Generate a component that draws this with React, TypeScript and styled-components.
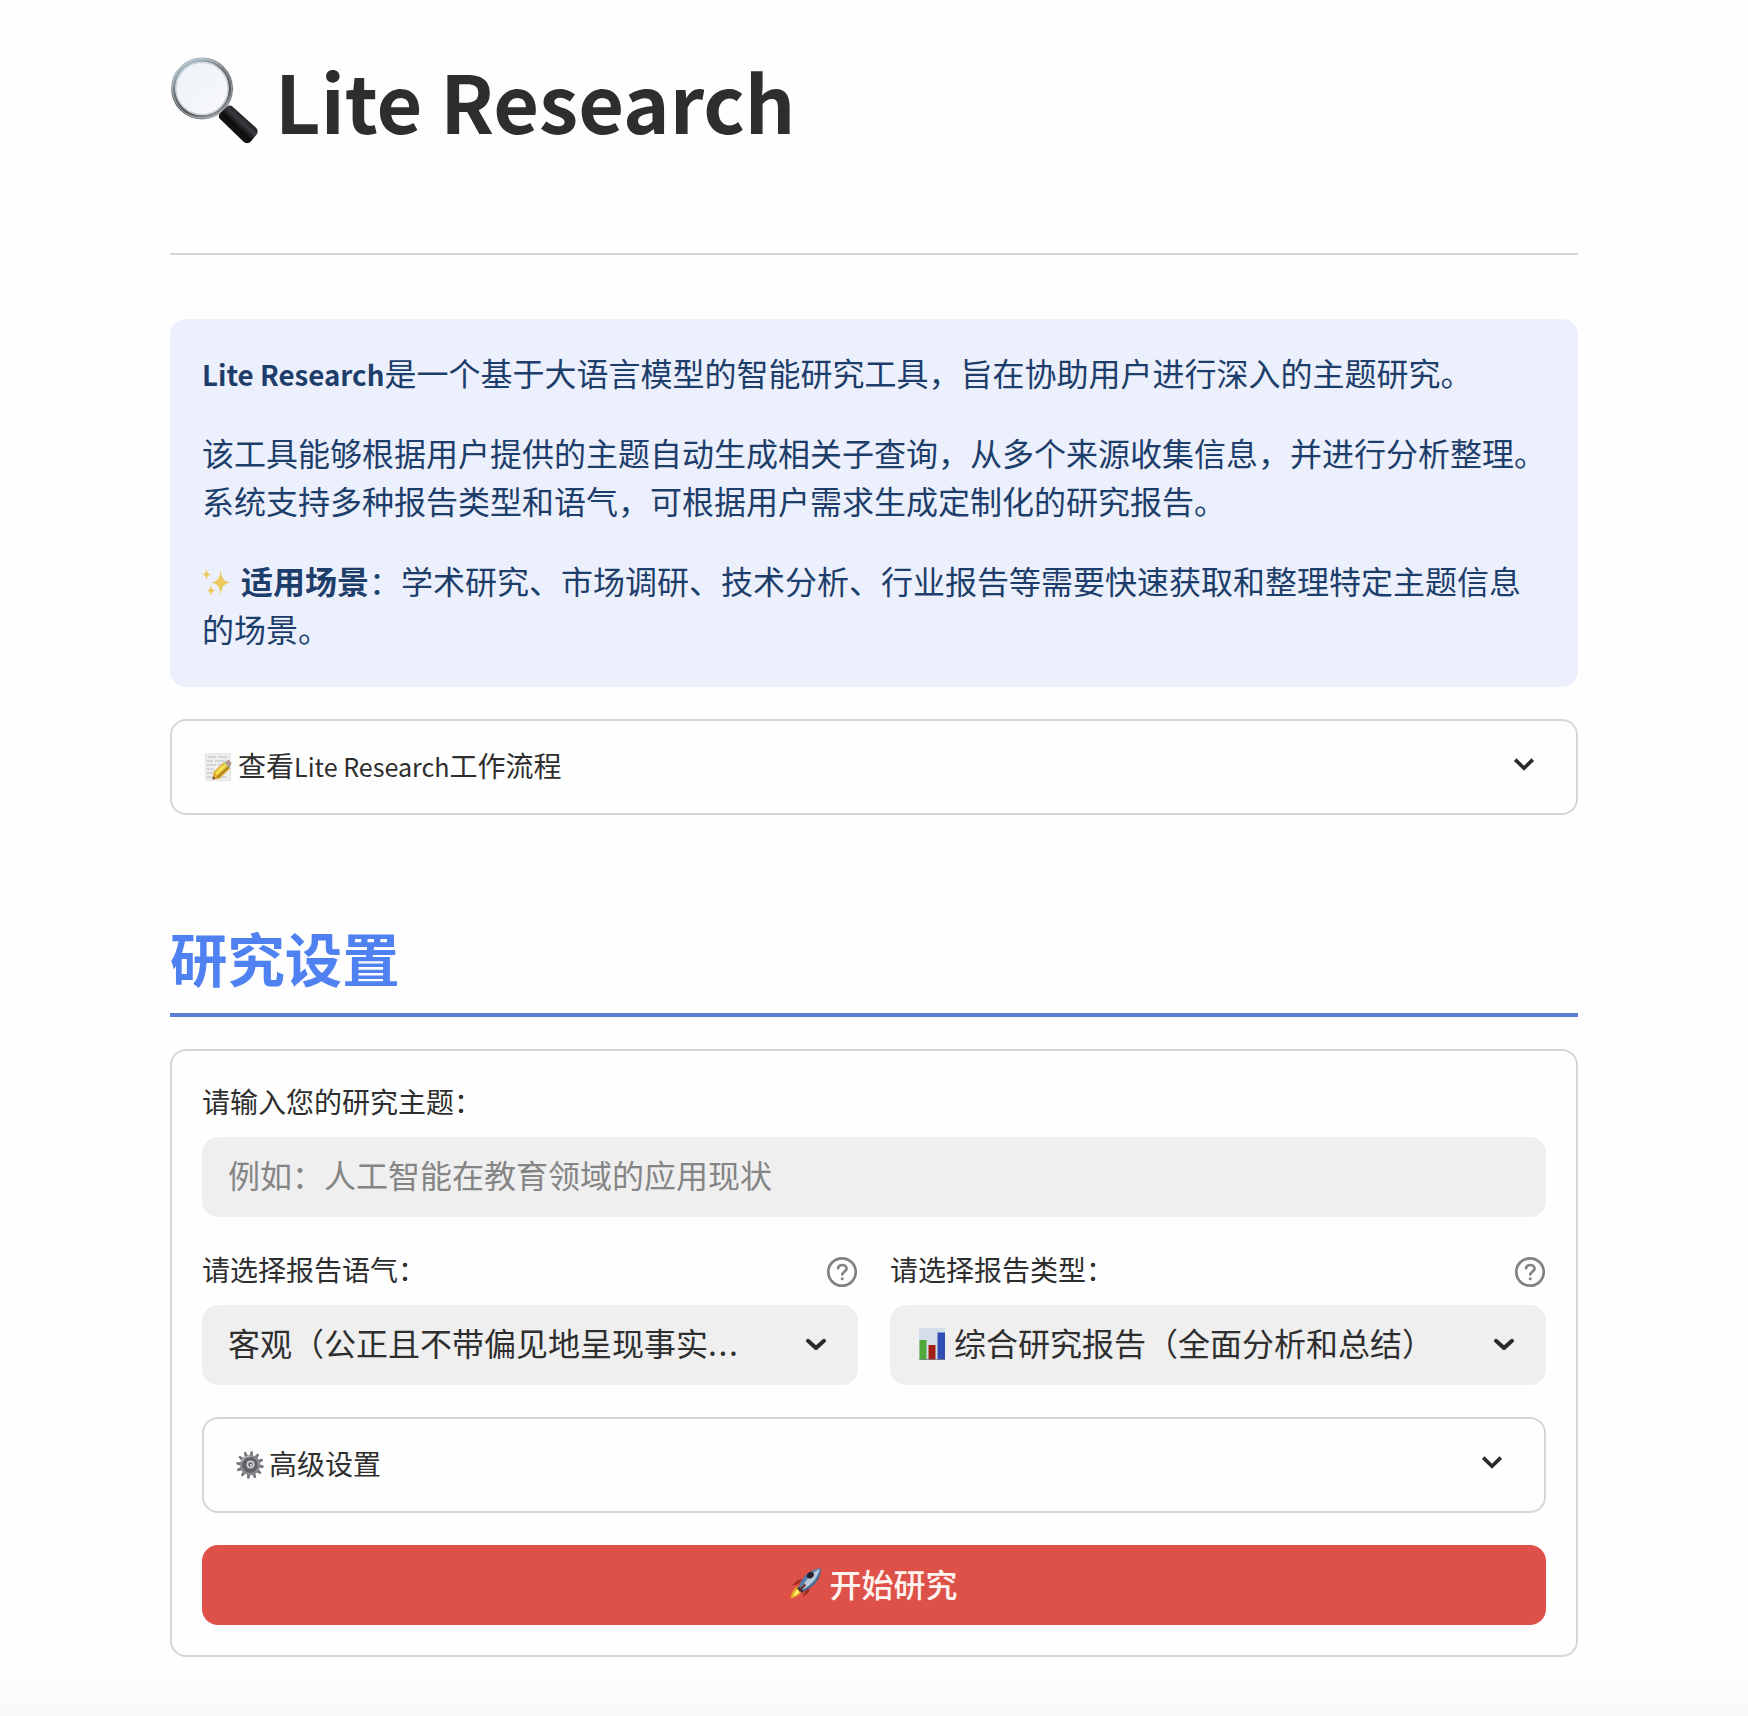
import React from 'react';
import styled, { createGlobalStyle } from 'styled-components';

const Global = createGlobalStyle`
  *, *::before, *::after { box-sizing: border-box; }
  body {
    margin: 0;
    background: #fefefe;
    color: #2e2e2e;
    font-family: "Noto Sans CJK SC", "Noto Sans", sans-serif;
  }
  h1, h2, p { margin: 0; }
`;

const Page = styled.div`
  height: 1716px;
  padding: 44px 170px 0;
  background: linear-gradient(to bottom, #fefefe 1670px, #f8f8f8 1716px);
  overflow: hidden;
`;

const Main = styled.main`
  display: flex;
  flex-direction: column;
`;

const Title = styled.h1`
  display: flex;
  align-items: center;
  gap: 17px;
  height: 112px;
  font-size: 79px;
  line-height: 112px;
  font-weight: 700;
  white-space: nowrap;
`;

const Rule = styled.hr`
  width: 100%;
  height: 2px;
  margin: 97px 0 64px;
  border: 0;
  background: #d5d5d6;
`;

const InfoBox = styled.section`
  display: flex;
  flex-direction: column;
  gap: 32px;
  height: 368px;
  padding: 29px 32px 32px;
  border-radius: 16px;
  background: #ecf0fc;
  color: #1d3e6b;
  font-size: 32px;
  line-height: 48px;
  white-space: nowrap;
`;

const Latin = styled.span<{ $size: number; $bold?: boolean; $track?: number }>`
  font-size: ${(p) => p.$size}px;
  font-weight: ${(p) => (p.$bold ? 700 : 400)};
  letter-spacing: ${(p) => p.$track ?? 0}px;
  line-height: 1;
`;

const EmojiSlot = styled.span<{ $w: number; $after?: number; $before?: number }>`
  display: inline-flex;
  width: ${(p) => p.$w}px;
  margin-left: ${(p) => p.$before ?? 0}px;
  margin-right: ${(p) => p.$after ?? 0}px;
  vertical-align: -4px;
  flex: none;
  line-height: 0;
`;

const Expander = styled.button`
  display: flex;
  align-items: center;
  justify-content: space-between;
  width: 100%;
  height: 96px;
  margin: 32px 0 0;
  padding: 0 41px 5px 32px;
  border: 2px solid #d5d6d6;
  border-radius: 16px;
  background: transparent;
  color: inherit;
  font: inherit;
  font-size: 28px;
  line-height: 42px;
  text-align: left;
`;

const Section = styled.h2`
  height: 120px;
  margin-top: 82px;
  border-bottom: 4px solid #5c7fd6;
  color: #4f82f0;
  font-size: 57.4px;
  line-height: 120px;
  font-weight: 700;
`;

const Form = styled.form`
  display: flex;
  flex-direction: column;
  height: 608px;
  margin-top: 32px;
  padding: 30px;
  border: 2px solid #d5d6d6;
  border-radius: 16px;
`;

const LabelRow = styled.div`
  display: flex;
  align-items: center;
  justify-content: space-between;
  height: 42px;
  margin-bottom: 14px;
  font-size: 28px;
  line-height: 40px;
`;

const LabelText = styled.span`
  height: 42px;
`;

const HelpSlot = styled.span`
  display: flex;
  margin-top: 4px;
`;

const Field = styled.div<{ $muted?: boolean }>`
  display: flex;
  align-items: center;
  justify-content: space-between;
  height: 80px;
  padding: 0 31px 6px 26px;
  border-radius: 16px;
  background: #efeff0;
  color: ${(p) => (p.$muted ? '#858585' : '#2e2e2e')};
  font-size: 32px;
  line-height: 48px;
  white-space: nowrap;

  > svg {
    margin-top: 4px;
  }
`;

const Columns = styled.div`
  display: grid;
  grid-template-columns: 1fr 1fr;
  gap: 32px;
  margin-top: 32px;
`;

const Submit = styled.button`
  display: flex;
  align-items: center;
  justify-content: center;
  height: 80px;
  margin-top: 32px;
  padding: 0 0 5px;
  border: 0;
  border-radius: 16px;
  background: #de5148;
  color: #fff3f0;
  font: inherit;
  font-size: 32px;
  font-weight: 500;
  line-height: 48px;
`;

const Chevron = ({ round }: { round?: boolean }) => (
  <svg width="22" height="15" viewBox="0 0 22 15" fill="none" stroke="#2b2b2d">
    {round ? (
      <path d="M3 3.8 11 11l8-7.2" strokeWidth="4" strokeLinecap="round" strokeLinejoin="round" />
    ) : (
      <path d="M2.2 2.6 11 11.2l8.8-8.6" strokeWidth="3.6" />
    )}
  </svg>
);

const Help = () => (
  <HelpSlot>
    <svg width="32" height="32" viewBox="0 0 32 32" fill="none" stroke="#828282" strokeWidth="2.7">
      <circle cx="16" cy="16" r="13.7" />
      <path d="M12 12.2c.6-2.1 2.2-3.2 4.3-3.2 2.4 0 4.2 1.5 4.2 3.7 0 2.9-4.2 3.2-4.2 5.8" strokeLinecap="round" />
      <circle cx="16.2" cy="22.8" r="1.5" fill="#828282" stroke="none" />
    </svg>
  </HelpSlot>
);

const Magnifier = () => (
  <svg width="88" height="88" viewBox="0 0 88 88">
    <defs>
      <linearGradient id="rim" x1=".2" y1="0" x2=".7" y2="1">
        <stop offset="0" stopColor="#b4c6d0" />
        <stop offset=".4" stopColor="#6d7478" />
        <stop offset=".75" stopColor="#54575a" />
        <stop offset="1" stopColor="#8e9092" />
      </linearGradient>
      <linearGradient id="glass" x1="0" y1="0" x2=".7" y2="1">
        <stop offset="0" stopColor="#edf3f8" />
        <stop offset="1" stopColor="#f7f8fa" />
      </linearGradient>
      <linearGradient id="grip" x1=".25" y1=".75" x2=".75" y2=".25">
        <stop offset="0" stopColor="#19191b" />
        <stop offset=".4" stopColor="#0d0d0f" />
        <stop offset=".66" stopColor="#3c3c40" />
        <stop offset="1" stopColor="#0b0b0d" />
      </linearGradient>
    </defs>
    <path d="m47 55 7-6.500 6 5.500-7.500 7z" fill="#85888b" />
    <circle cx="32" cy="32.500" r="28.800" fill="url(#glass)" stroke="url(#rim)" strokeWidth="4.200" />
    <circle cx="32" cy="32.500" r="29.600" fill="none" stroke="#d3dce1" strokeWidth=".8" opacity=".7" />
    <circle cx="32" cy="32.500" r="26" fill="none" stroke="#c6cdd2" strokeWidth="1.200" />
    <path d="M49.500 62.500c-1.200-1.600-1-3.200.2-4.600l7.600-7.300c1.500-1.300 3.500-1.400 5.100 0L86 71.800c2 2.200 2.200 4.600.4 7l-5.600 6.700c-2.200 2.200-5.200 2.300-7.500 0z" fill="url(#grip)" />
  </svg>
);

const Sparkles = () => (
  <svg width="30" height="30" viewBox="0 0 30 30" fill="#ecca60">
    <path d="M18.700 1.500c.9 9 2.600 11.600 10.300 13-7.700 1.400-9.400 4.100-10.300 13-.9-8.900-2.600-11.600-10.300-13 7.700-1.400 9.400-4 10.300-13z" />
    <path d="M4.500.5c.6 4 1.300 5.200 4.500 5.900-3.200.7-3.900 2-4.500 6C3.900 8.400 3.200 7.100 0 6.400 3.200 5.700 3.900 4.500 4.500.5z" />
    <path d="M9 16.500c.6 4 1.300 5.200 4.500 5.900-3.200.7-3.900 2-4.500 6-.6-4-1.300-5.300-4.500-6C7.700 21.700 8.400 20.500 9 16.500z" />
  </svg>
);

const Memo = () => (
  <svg width="28" height="28" viewBox="0 0 28 28">
    <path d="M1.500.5h25v27h-25z" fill="#ededeb" stroke="#dadada" strokeWidth=".6" />
    <path d="M4 4h8m2 0h9M3 8h6m2 0h11M3 12h9m2 0h6M3 16h7m-7 4h6m-6 4h7m6 0h7" stroke="#b4b2ba" strokeWidth="1.200" strokeDasharray="2.500 .7" />
    <path d="m8.500 26.500 1.200-7.700L20 9.200l6.200 6-10.500 10.300z" fill="#dcae2c" />
    <path d="m11 19.500 10.500-9.500 2 2-10.500 10z" fill="#f7df55" />
    <path d="m13 24.800 12-11" stroke="#9b701c" strokeWidth="1.200" />
    <path d="m20.500 9.700 2.600-2.200c2.600-.8 5 1.600 4 4.300l-1.800 2.900z" fill="#9da5a0" />
    <path d="m23.500 8 3.100 3.500" stroke="#c98a7e" strokeWidth="2" />
    <path d="m8.500 26.500.8-3.200 2.300 2.300z" fill="#55452c" />
  </svg>
);

const BarChart = () => (
  <svg width="26" height="32" viewBox="0 0 26 32">
    <path d="M0 0h26v32H0z" fill="#d3deea" />
    <path d="M.500 12h7v20h-7z" fill="#4ea83a" />
    <path d="M9.500 17h7v15h-7z" fill="#a32014" />
    <path d="M18.500 4.500H26V32h-7.500z" fill="#304eb5" />
    <path d="M0 31.500h26" stroke="#798089" strokeWidth=".8" />
  </svg>
);

const teeth = Array.from({ length: 12 }, (_, i) => i * 30);

const Gear = () => (
  <svg width="28" height="28" viewBox="0 0 28 28">
    <g fill="#74747a">
      {teeth.map((angle) => (
        <path key={angle} d="M12.900.2h2l.8 4.800h-3.600z" transform={`rotate(${angle + 8} 14 14)`} />
      ))}
    </g>
    <circle cx="14" cy="14" r="10.100" fill="#8a8a90" />
    <circle cx="14" cy="14" r="7.800" fill="#606067" />
    <path d="M5.500 11c1.500-4 5-6 9-5.700" fill="none" stroke="#b2b2b6" strokeWidth="1.500" />
    <circle cx="14.500" cy="13.500" r="4" fill="#d0d0d2" />
    <circle cx="14.500" cy="13.500" r="2.200" fill="#606064" />
    <circle cx="15" cy="14" r="1" fill="#efefef" />
  </svg>
);

const Rocket = () => (
  <svg width="32" height="32" viewBox="0 0 32 32">
    <path d="M8.500 17 2 18.800l5-5.600 6.500-1.700zM15 23.500l-2.200 6.500 6.200-4.700.8-6.500z" fill="#a62c26" />
    <path d="M9.500 19.500C4.500 20 1.800 24 .5 31.500 6.500 30 10.500 28 12 23z" fill="#e5a829" />
    <path d="M9 22c-3 1-5 4-6 7.500 4-1.500 6-3.200 7-6z" fill="#fff065" />
    <path d="M8.800 20.800C10.500 12 17.500 3 30.800 1c.8 9.500-7 19.500-18.300 23.500z" fill="#577da5" />
    <path d="M12 21C15 14 21 6 29.500 2c-1 7-7 15-15.500 20z" fill="#b8cad9" />
    <path d="M14 23c8-4 15.500-11 16.800-22 .7 10-7.300 19.500-18.300 23.500z" fill="#345f8e" />
    <path d="m8.800 19.800 5 4.500-1.800 1.700-5-4.600z" fill="#34343b" />
    <ellipse cx="20.300" cy="8.200" rx="3.700" ry="3" transform="rotate(-35 20.300 8.200)" fill="#28222b" />
    <path d="m9 24 6.500-6.500" stroke="#6c2b25" strokeWidth="2" />
  </svg>
);

export default function App() {
  return (
    <Page>
      <Global />
      <Main>
        <Title>
          <Magnifier />
          <span>Lite Research</span>
        </Title>
        <Rule />
        <InfoBox>
          <p>
            <Latin $size={27.7} $bold>Lite Research</Latin>是一个基于大语言模型的智能研究工具，旨在协助用户进行深入的主题研究。
          </p>
          <p>
            该工具能够根据用户提供的主题自动生成相关子查询，从多个来源收集信息，并进行分析整理。
            <br />
            系统支持多种报告类型和语气，可根据用户需求生成定制化的研究报告。
          </p>
          <p>
            <EmojiSlot $w={30} $after={9}><Sparkles /></EmojiSlot>
            <strong>适用场景</strong>：学术研究、市场调研、技术分析、行业报告等需要快速获取和整理特定主题信息
            <br />
            的场景。
          </p>
        </InfoBox>
        <Expander type="button">
          <span>
            <EmojiSlot $w={28} $after={6}><Memo /></EmojiSlot>
            查看<Latin $size={25.1}>Lite Research</Latin>工作流程
          </span>
          <Chevron />
        </Expander>
        <Section>研究设置</Section>
        <Form>
          <LabelRow>
            <LabelText>请输入您的研究主题：</LabelText>
          </LabelRow>
          <Field $muted>例如：人工智能在教育领域的应用现状</Field>
          <Columns>
            <div>
              <LabelRow>
                <LabelText>请选择报告语气：</LabelText>
                <Help />
              </LabelRow>
              <Field>
                <span>客观（公正且不带偏见地呈现事实<Latin $size={32} $track={1.6}>...</Latin></span>
                <Chevron round />
              </Field>
            </div>
            <div>
              <LabelRow>
                <LabelText>请选择报告类型：</LabelText>
                <Help />
              </LabelRow>
              <Field>
                <span>
                  <EmojiSlot $w={26} $before={3} $after={9}><BarChart /></EmojiSlot>
                  综合研究报告（全面分析和总结）
                </span>
                <Chevron round />
              </Field>
            </div>
          </Columns>
          <Expander type="button">
            <span>
              <EmojiSlot $w={28} $after={5}><Gear /></EmojiSlot>
              高级设置
            </span>
            <Chevron />
          </Expander>
          <Submit type="button">
            <EmojiSlot $w={32} $after={7}><Rocket /></EmojiSlot>
            开始研究
          </Submit>
        </Form>
      </Main>
    </Page>
  );
}
